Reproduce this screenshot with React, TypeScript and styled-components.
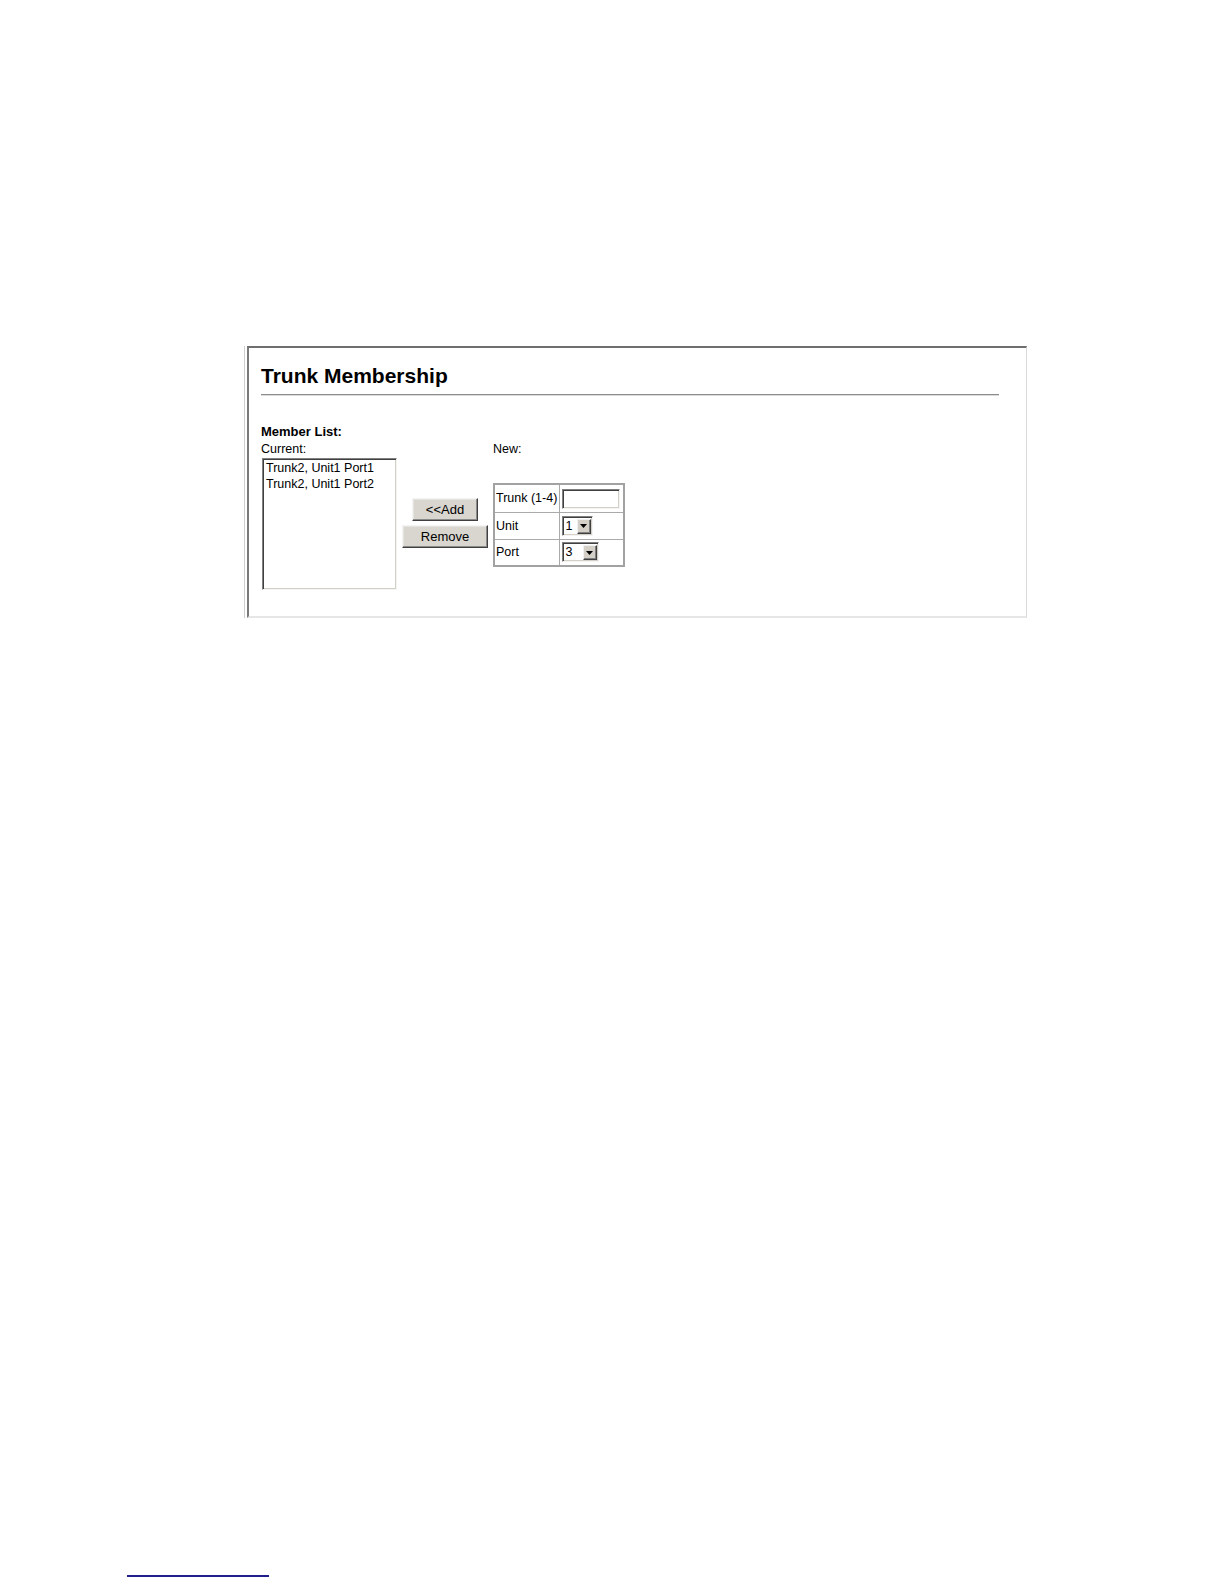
import React from "react";
import styled, { createGlobalStyle } from "styled-components";

const Global = createGlobalStyle`
  html, body { margin: 0; padding: 0; background: #ffffff; }
  body { font-family: "Liberation Sans", Arial, Helvetica, sans-serif; color: #000; }
  * { box-sizing: border-box; }
`;

const Page = styled.div`
  width: 1224px;
  min-height: 1584px;
  display: flex;
  flex-direction: column;
  padding-top: 346px;
`;

const Shell = styled.div`
  margin-left: 244px;
  width: 784px;
  border-left: 1px solid #cfcfcf;
  padding-left: 2px;
`;

const Frame = styled.section`
  width: 780px;
  background: #fff;
  border-top: 2px solid #6e6e6e;
  border-left: 2px solid #7a7a7a;
  border-right: 1px solid #dadada;
  border-bottom: 2px solid #e6e6e6;
  padding: 16px 27px 26px 12px;
`;

const Title = styled.h1`
  margin: 0;
  font-size: 21px;
  line-height: 24px;
  font-weight: bold;
  letter-spacing: 0;
`;

const Rule = styled.div`
  margin-top: 6px;
  height: 2px;
  border-top: 1px solid #8c8c8c;
  border-bottom: 1px solid #dcdcdc;
`;

const SectionLabel = styled.div`
  margin-top: 26px;
  font-size: 13px;
  line-height: 19px;
  font-weight: bold;
`;

const Columns = styled.div`
  display: flex;
  align-items: flex-start;
  gap: 5px;
`;

const Column = styled.div`
  display: flex;
  flex-direction: column;
`;

const Caption = styled.div`
  font-size: 12.5px;
  line-height: 16px;
`;

const ListBox = styled.div`
  margin-top: 1px;
  margin-left: 1px;
  width: 135px;
  height: 132px;
  background: #fff;
  border-top: 1px solid #808080;
  border-left: 1px solid #808080;
  border-right: 1px solid #f4f4f4;
  border-bottom: 1px solid #f4f4f4;
  box-shadow: inset 1px 1px 0 #404040, inset -1px -1px 0 #d4d0c8;
  padding: 2px 3px;
  font-size: 12.5px;
  line-height: 15.5px;
`;

const ListItem = styled.div`
  white-space: nowrap;
`;

const ButtonColumn = styled.div`
  width: 86px;
  padding-top: 57px;
  display: flex;
  flex-direction: column;
  align-items: center;
  gap: 4px;
`;

const Button = styled.button<{ $w: number }>`
  width: ${(p) => p.$w}px;
  height: 23px;
  padding: 0;
  margin: 0;
  background: #d9d6d0;
  font-family: "Liberation Sans", Arial, sans-serif;
  font-size: 13px;
  color: #000;
  border-top: 1px solid #f4f4f4;
  border-left: 1px solid #f4f4f4;
  border-right: 1px solid #404040;
  border-bottom: 1px solid #404040;
  box-shadow: inset -1px -1px 0 #8a8a8a, inset 1px 1px 0 #e6e4e0;
  cursor: default;
`;

const FormTable = styled.table`
  margin-top: 26px;
  width: 130px;
  table-layout: fixed;
  border-collapse: collapse;
  border: 2px solid #a2a2a2;
`;

const Cell = styled.td<{ $h: number }>`
  height: ${(p) => p.$h}px;
  width: 65px;
  border: 1px solid #aaaaaa;
  padding: 0 0 0 1px;
  font-size: 12.5px;
  white-space: nowrap;
  vertical-align: middle;
`;

const ValueCell = styled(Cell)`
  padding-left: 2px;
`;

const TextInput = styled.input`
  display: block;
  width: 58px;
  height: 20px;
  margin-top: 2px;
  padding: 0 2px;
  background: #fff;
  border-top: 1px solid #808080;
  border-left: 1px solid #808080;
  border-right: 1px solid #f4f4f4;
  border-bottom: 1px solid #f4f4f4;
  box-shadow: inset 1px 1px 0 #404040, inset -1px -1px 0 #d4d0c8;
  font-family: "Liberation Sans", Arial, sans-serif;
  font-size: 12.5px;
  outline: none;
`;

const SelectBox = styled.div<{ $w: number }>`
  display: flex;
  width: ${(p) => p.$w}px;
  height: 20px;
  background: #fff;
  border-top: 1px solid #808080;
  border-left: 1px solid #808080;
  border-right: 1px solid #f4f4f4;
  border-bottom: 1px solid #f4f4f4;
  box-shadow: inset 1px 1px 0 #404040, inset -1px -1px 0 #d4d0c8;
  padding: 2px 1px 1px 2px;
`;

const SelectValue = styled.div`
  flex: 1;
  font-size: 12.5px;
  line-height: 15px;
  padding-left: 1px;
`;

const ArrowButton = styled.div`
  width: 14px;
  height: 15px;
  background: #d4d0c8;
  border-top: 1px solid #f0f0f0;
  border-left: 1px solid #f0f0f0;
  border-right: 1px solid #404040;
  border-bottom: 1px solid #404040;
  box-shadow: inset -1px -1px 0 #808080;
  display: flex;
  align-items: center;
  justify-content: center;
`;

const FooterRule = styled.div`
  margin-top: auto;
  margin-left: 127px;
  margin-bottom: 7px;
  width: 142px;
  height: 2px;
  background: #1e1e8c;
`;

const Arrow = () => (
  <svg width="7" height="4" viewBox="0 0 7 4">
    <polygon points="0,0 7,0 3.5,4" fill="#000" />
  </svg>
);

const Select = ({ value, width }: { value: string; width: number }) => (
  <SelectBox $w={width}>
    <SelectValue>{value}</SelectValue>
    <ArrowButton>
      <Arrow />
    </ArrowButton>
  </SelectBox>
);

export default function App() {
  return (
    <>
      <Global />
      <Page>
        <Shell>
          <Frame>
            <Title>Trunk Membership</Title>
            <Rule />
            <SectionLabel>Member List:</SectionLabel>
            <Columns>
              <Column>
                <Caption>Current:</Caption>
                <ListBox role="listbox">
                  <ListItem>Trunk2, Unit1 Port1</ListItem>
                  <ListItem>Trunk2, Unit1 Port2</ListItem>
                </ListBox>
              </Column>
              <ButtonColumn>
                <Button $w={66}>&lt;&lt;Add</Button>
                <Button $w={86}>Remove</Button>
              </ButtonColumn>
              <Column>
                <Caption>New:</Caption>
                <FormTable>
                  <tbody>
                    <tr>
                      <Cell $h={28}>Trunk (1-4)</Cell>
                      <ValueCell $h={28}>
                        <TextInput defaultValue="" />
                      </ValueCell>
                    </tr>
                    <tr>
                      <Cell $h={27}>Unit</Cell>
                      <ValueCell $h={27}>
                        <Select value="1" width={31} />
                      </ValueCell>
                    </tr>
                    <tr>
                      <Cell $h={27}>Port</Cell>
                      <ValueCell $h={27}>
                        <Select value="3" width={37} />
                      </ValueCell>
                    </tr>
                  </tbody>
                </FormTable>
              </Column>
            </Columns>
          </Frame>
        </Shell>
        <FooterRule />
      </Page>
    </>
  );
}
